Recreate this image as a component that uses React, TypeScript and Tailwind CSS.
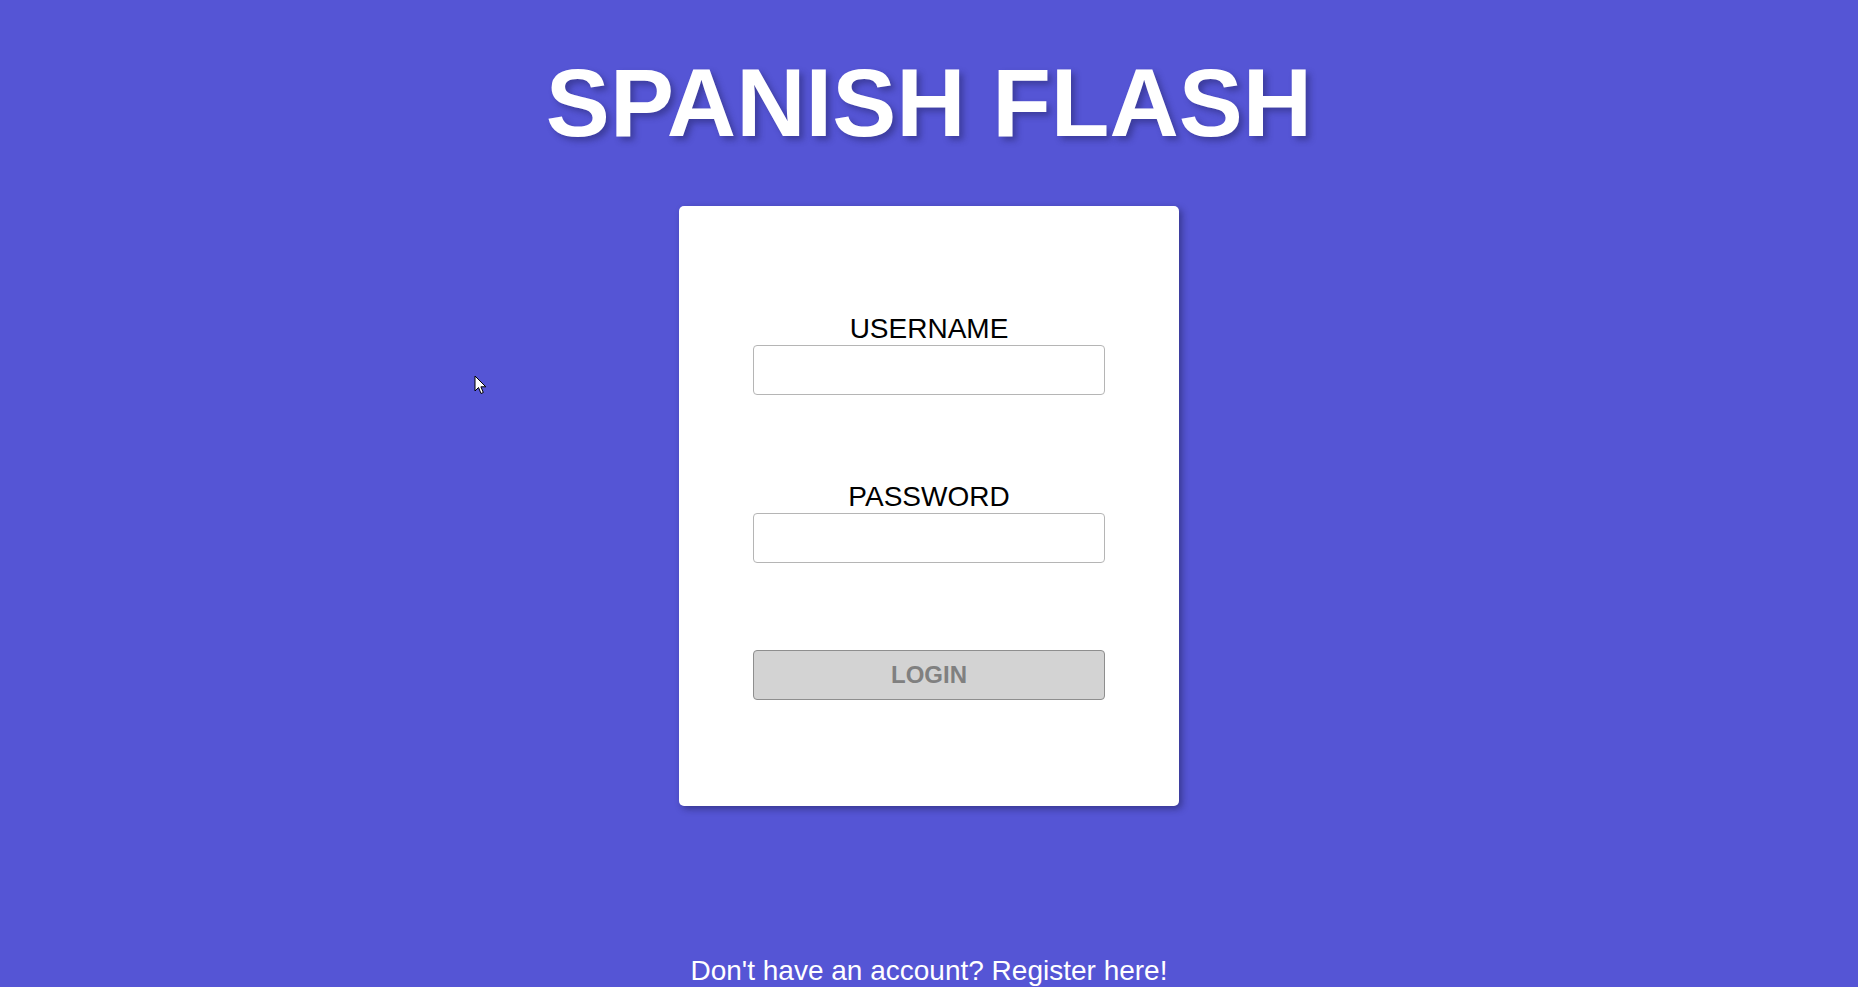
import { useState } from "react";

function Field({ label, type }: { label: string; type: string }) {
  const [value, setValue] = useState("");
  return (
    <label className="flex flex-col items-center">
      <span className="text-[28px] leading-none text-black">{label}</span>
      <input
        type={type}
        value={value}
        onChange={(e) => setValue(e.target.value)}
        className="mt-[2px] h-[50px] w-[352px] rounded-[4px] border border-[#b5b5b5] bg-white px-3 text-xl outline-none"
      />
    </label>
  );
}

// Mauszeiger aus dem Screenshot
function Pointer() {
  return (
    <svg
      className="pointer-events-none absolute left-[474px] top-[375px]"
      width="13"
      height="20"
      viewBox="0 0 13 20"
      aria-hidden="true"
    >
      <path
        d="M1 1 L1 16 L4.5 12.5 L7 18.5 L9.3 17.5 L6.9 11.8 L11.8 11.8 Z"
        fill="#fff"
        stroke="#000"
        strokeWidth="1"
        strokeLinejoin="miter"
      />
    </svg>
  );
}

export default function App() {
  return (
    <div className="relative min-h-[987px] bg-[#5555d5] font-['Liberation_Sans',Arial,sans-serif]">
      <Pointer />
      <div className="flex flex-col items-center">
        <h1 className="pt-[55px] text-[96px] font-bold leading-none text-white [text-shadow:4px_4px_6px_rgba(30,30,90,0.45)]">
          SPANISH FLASH
        </h1>

        <div className="mt-[55px] flex h-[600px] w-[500px] flex-col items-center rounded-[5px] bg-white pt-[109px] shadow-[3px_3px_7px_rgba(20,20,60,0.45)]">
          <Field label="USERNAME" type="text" />
          <div className="mt-[88px]">
            <Field label="PASSWORD" type="password" />
          </div>
          <button
            type="button"
            disabled
            className="mt-[87px] h-[50px] w-[352px] rounded-[4px] border border-[#8e8e8e] bg-[#d3d3d3] text-[24px] font-bold text-[#808080]"
          >
            LOGIN
          </button>
        </div>

        <p className="mt-[151px] text-[28px] leading-none text-white">
          Don't have an account? Register here!
        </p>
      </div>
    </div>
  );
}
